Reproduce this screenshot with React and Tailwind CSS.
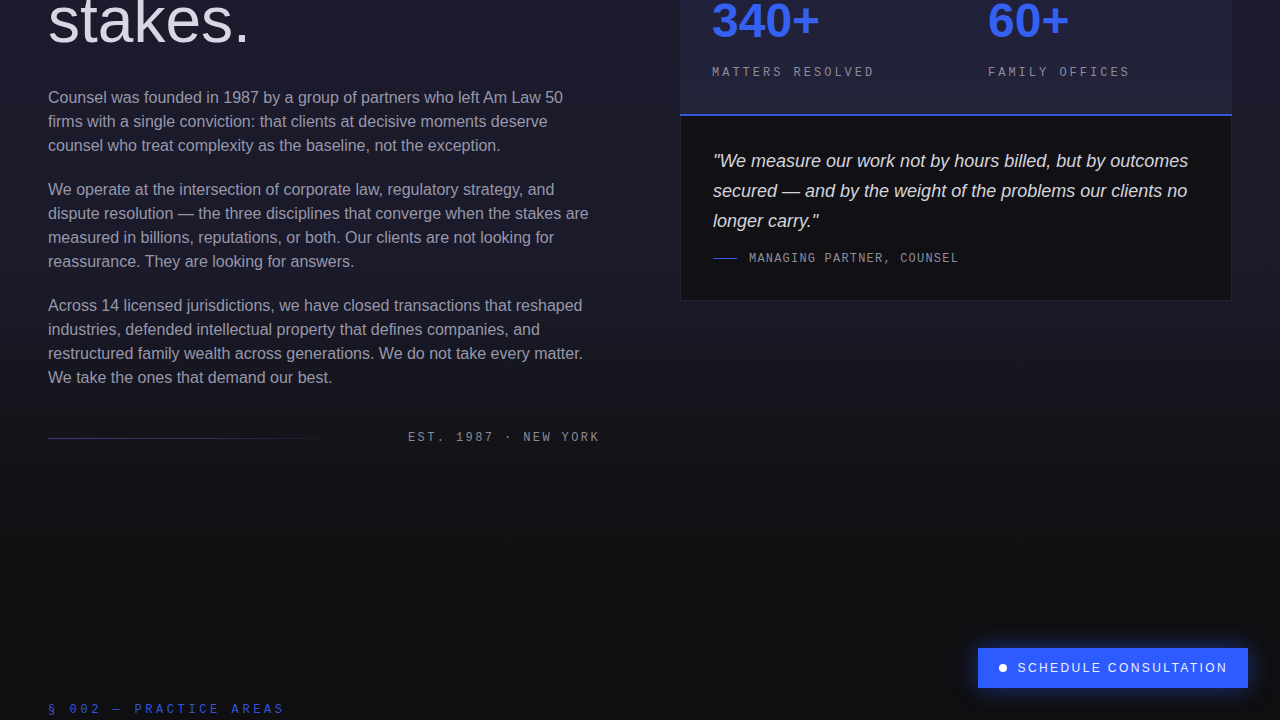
const sans = { fontFamily: '"Liberation Sans", Arial, sans-serif' };

function Divider() {
  return (
    <div className="mt-10 flex items-center gap-6">
      <div className="h-px flex-1 bg-gradient-to-r from-[#3a3f80] via-[#2c2e58] via-50% to-transparent to-90%" />
      <span className="font-['Liberation_Mono',monospace] text-xs leading-4 tracking-[0.2em] text-[#8a8a98]">
        EST. 1987 · NEW YORK
      </span>
    </div>
  );
}

function Stat({ value, label }) {
  return (
    <div>
      <p className="-mt-[3px] text-[48px] font-bold leading-[48px] text-[#3561f2]">{value}</p>
      <p className="mt-[20px] font-['Liberation_Mono',monospace] text-xs leading-4 tracking-[0.25em] text-[#8c8c9c]">
        {label}
      </p>
    </div>
  );
}

export default function App() {
  return (
    <div
      style={sans}
      className="relative h-[720px] overflow-hidden bg-[linear-gradient(180deg,#1c1b2d_0%,#1a1a2a_40%,#131318_62%,#101012_80%,#0f0f11_100%)]"
    >
      <section className="mx-auto grid max-w-[1280px] grid-cols-2 gap-20 px-12">
        <div>
          <h2 className="-mt-[13px] mb-[32px] text-[64px] leading-[67px] text-[#d8d6e4]">stakes.</h2>
          <div className="space-y-5 text-base leading-6 text-[#9797a9]">
            <p>
              Counsel was founded in 1987 by a group of partners who left Am Law 50 firms with a single conviction:
              that clients at decisive moments deserve counsel who treat complexity as the baseline, not the exception.
            </p>
            <p>
              We operate at the intersection of corporate law, regulatory strategy, and dispute resolution — the three
              disciplines that converge when the stakes are measured in billions, reputations, or both. Our clients are
              not looking for reassurance. They are looking for answers.
            </p>
            <p>
              Across 14 licensed jurisdictions, we have closed transactions that reshaped industries, defended
              intellectual property that defines companies, and restructured family wealth across generations. We do
              not take every matter. We take the ones that demand our best.
            </p>
          </div>
          <Divider />
        </div>

        <div>
          <div className="grid grid-cols-2 gap-16 border-b-2 border-[#3656e0] bg-gradient-to-b from-[#20203a] to-[#232338] px-8 pb-[33px]">
            <Stat value="340+" label="MATTERS RESOLVED" />
            <Stat value="60+" label="FAMILY OFFICES" />
          </div>
          <blockquote className="border border-t-0 border-[#22222e] bg-[#111115] px-8 pb-[33px] pt-[30px]">
            <p className="text-lg italic leading-[30px] text-[#d4d4dc]">
              "We measure our work not by hours billed, but by outcomes secured — and by the weight of the problems our
              clients no longer carry."
            </p>
            <div className="mt-[15px] flex items-start gap-3">
              <span className="mt-[7px] h-px w-6 shrink-0 bg-[#3656e0]" />
              <span className="font-['Liberation_Mono',monospace] text-xs leading-4 tracking-[0.1em] text-[#8c8c9a]">
                MANAGING PARTNER, COUNSEL
              </span>
            </div>
          </blockquote>
        </div>
      </section>

      <p className="absolute bottom-[2px] left-12 font-['Liberation_Mono',monospace] text-xs leading-4 tracking-[0.3em] text-[#3454d8]">
        § 002 — PRACTICE AREAS
      </p>

      <button
        type="button"
        className="absolute bottom-8 right-8 flex h-10 items-center gap-[11px] bg-[#2e5bff] pl-[21px] pr-5 text-xs tracking-[0.2em] text-[#eef1ff] shadow-[0_0_24px_rgba(46,91,255,0.45)]"
      >
        <span className="h-2 w-2 rounded-full bg-white" />
        SCHEDULE CONSULTATION
      </button>
    </div>
  );
}
